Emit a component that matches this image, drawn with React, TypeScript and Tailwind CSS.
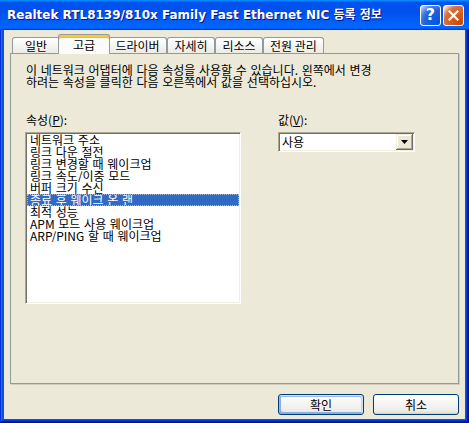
import React from "react";

const ko = { fontFamily: '"Noto Sans CJK KR", "DejaVu Sans", sans-serif' };

const properties = [
  "네트워크 주소",
  "링크 다운 절전",
  "링크 변경할 때 웨이크업",
  "링크 속도/이중 모드",
  "버퍼 크기 수신",
  "종료 후 웨이크 온 랜",
  "최적 성능",
  "APM 모드 사용 웨이크업",
  "ARP/PING 할 때 웨이크업",
];

function TitleBar() {
  return (
    <div className="h-[30px] flex items-center pl-[7px] pr-[5px] bg-[linear-gradient(180deg,#0997ff,#0053ee_8%,#0050ee_40%,#0066ff_88%,#0066ff_93%,#005bff_95%,#003dd7_96%,#003dd7)]">
      <span
        className="flex-1 text-white font-bold text-[12px] whitespace-nowrap [text-shadow:1px_1px_#0f1089]"
        style={{ fontFamily: '"DejaVu Sans", "Noto Sans CJK KR", sans-serif' }}
      >
        Realtek RTL8139/810x Family Fast Ethernet NIC 등록 정보
      </span>
      <div className="flex gap-[2px]">
        <div className="w-[21px] h-[21px] rounded-[3px] border border-white flex items-center justify-center bg-[radial-gradient(circle_at_90%_90%,#0054e9_0%,#2263d5_55%,#4479e4_70%,#a3bbec_90%,#ffffff_100%)]">
          <span className="text-white font-bold text-[16px] leading-none" style={{ fontFamily: '"DejaVu Sans", sans-serif' }}>
            ?
          </span>
        </div>
        <div className="w-[21px] h-[21px] rounded-[3px] border border-white flex items-center justify-center bg-[radial-gradient(circle_at_90%_90%,#cc4600_0%,#dc6527_55%,#cd7546_70%,#ffccb2_90%,#ffffff_100%)]">
          <svg width="11" height="11" viewBox="0 0 11 11">
            <path d="M1.5 1.5 L9.5 9.5 M9.5 1.5 L1.5 9.5" stroke="#fff" strokeWidth="2.2" strokeLinecap="square" />
          </svg>
        </div>
      </div>
    </div>
  );
}

function Tabs() {
  return (
    <div className="h-[19px] mt-[4px] pl-[8px] flex items-end text-[12px] text-black relative z-10" style={ko}>
      <div className="w-[48px] h-[16px] border border-b-0 border-[#919b9c] rounded-t-[3px] bg-[linear-gradient(180deg,#ffffff,#f3f3ef_60%,#ecebe6)] flex items-center justify-center leading-none">
        일반
      </div>
      <div className="w-[52px] h-[20px] -mx-[2px] -mb-[1px] relative border border-b-0 border-[#919b9c] rounded-t-[3px] bg-[#fbfbf9] shadow-[inset_0_2px_#ffc83c,inset_0_3px_#f5b54b] flex items-center justify-center leading-none pt-[1px]">
        고급
      </div>
      <div className="w-[59px] h-[16px] border border-b-0 border-[#919b9c] rounded-t-[3px] bg-[linear-gradient(180deg,#ffffff,#f3f3ef_60%,#ecebe6)] flex items-center justify-center leading-none">
        드라이버
      </div>
      <div className="w-[48px] h-[16px] border border-b-0 border-[#919b9c] rounded-t-[3px] bg-[linear-gradient(180deg,#ffffff,#f3f3ef_60%,#ecebe6)] flex items-center justify-center leading-none">
        자세히
      </div>
      <div className="w-[48px] h-[16px] border border-b-0 border-[#919b9c] rounded-t-[3px] bg-[linear-gradient(180deg,#ffffff,#f3f3ef_60%,#ecebe6)] flex items-center justify-center leading-none">
        리소스
      </div>
      <div className="w-[61px] h-[16px] border border-b-0 border-[#919b9c] rounded-t-[3px] bg-[linear-gradient(180deg,#ffffff,#f3f3ef_60%,#ecebe6)] flex items-center justify-center leading-none">
        전원 관리
      </div>
    </div>
  );
}

function Panel() {
  return (
    <div
      className="ml-[6px] w-[449px] h-[331px] border border-[#919b9c] bg-[#ece9d8] shadow-[1px_1px_#d0cdbf] pt-[10px] pl-[14px] text-[12px] text-black [word-spacing:1px]"
      style={ko}
    >
      <p className="pl-[1px] leading-[12px]">
        이 네트워크 어댑터에 다음 속성을 사용할 수 있습니다. 왼쪽에서 변경
        <br />
        하려는 속성을 클릭한 다음 오른쪽에서 값을 선택하십시오.
      </p>
      <div className="flex gap-[37px] mt-[26px]">
        <div className="flex flex-col">
          <div className="pl-[1px] leading-[12px] h-[12px]">
            속성(<u>P</u>):
          </div>
          <div className="mt-[6px] w-[216px] h-[172px] border border-t-[#aca899] border-l-[#aca899] border-r-white border-b-white shadow-[inset_1px_1px_#716f64,inset_-1px_-1px_#f1efe2] bg-white p-[1px] overflow-hidden">
            {properties.map((p, i) =>
              i === 5 ? (
                <div
                  key={p}
                  className="h-[12px] leading-[10px] pl-[2px] bg-[#316ac5] text-white border border-dotted border-[#a9b8d6] whitespace-nowrap overflow-hidden"
                >
                  {p}
                </div>
              ) : (
                <div key={p} className="h-[12px] leading-[12px] pl-[3px] whitespace-nowrap overflow-hidden">
                  {p}
                </div>
              )
            )}
          </div>
        </div>
        <div className="flex flex-col">
          <div className="leading-[12px] h-[12px]">
            값(<u>V</u>):
          </div>
          <div className="mt-[6px] w-[137px] h-[20px] border border-t-[#aca899] border-l-[#aca899] border-r-white border-b-white shadow-[inset_1px_1px_#716f64,inset_-1px_-1px_#f1efe2] bg-white flex items-center p-[1px]">
            <span className="flex-1 pl-[2px] leading-none">사용</span>
            <div className="w-[17px] h-[16px] bg-[#ece9d8] shadow-[inset_-1px_-1px_#716f64,inset_1px_1px_#f1efe2,inset_-2px_-2px_#aca899,inset_2px_2px_#ffffff] flex items-center justify-center">
              <svg width="7" height="4" viewBox="0 0 7 4">
                <path d="M0 0 H7 L3.5 4 Z" fill="#000" />
              </svg>
            </div>
          </div>
        </div>
      </div>
    </div>
  );
}

export default function App() {
  return (
    <div className="w-[469px] h-[423px] flex flex-col overflow-hidden bg-[#0855dd] shadow-[inset_-1px_-1px_#00138c,inset_1px_1px_#0831d9,inset_-2px_-2px_#001ea0,inset_2px_2px_#166aee,inset_-3px_-3px_#003bda,inset_3px_3px_#0855dd]">
      <TitleBar />
      <div className="flex-1 mx-[4px] mb-[4px] bg-[#ece9d8] flex flex-col">
        <Tabs />
        <Panel />
        <div className="flex justify-end gap-[9px] mt-[10px] pr-[6px] text-[12px]" style={ko}>
          <button className="w-[86px] h-[21px] rounded-[3px] border border-[#003c74] bg-[linear-gradient(180deg,#ffffff,#ecebe6_86%,#d6d0c5)] shadow-[inset_-1px_1px_#cee7ff,inset_1px_2px_#98b8ea,inset_-2px_2px_#bcd4f6,inset_1px_-1px_#89ade4,inset_2px_-2px_#89ade4] flex items-center justify-center leading-none">
            확인
          </button>
          <button className="w-[86px] h-[21px] rounded-[3px] border border-[#003c74] bg-[linear-gradient(180deg,#ffffff,#ecebe6_86%,#d6d0c5)] flex items-center justify-center leading-none">
            취소
          </button>
        </div>
      </div>
    </div>
  );
}
